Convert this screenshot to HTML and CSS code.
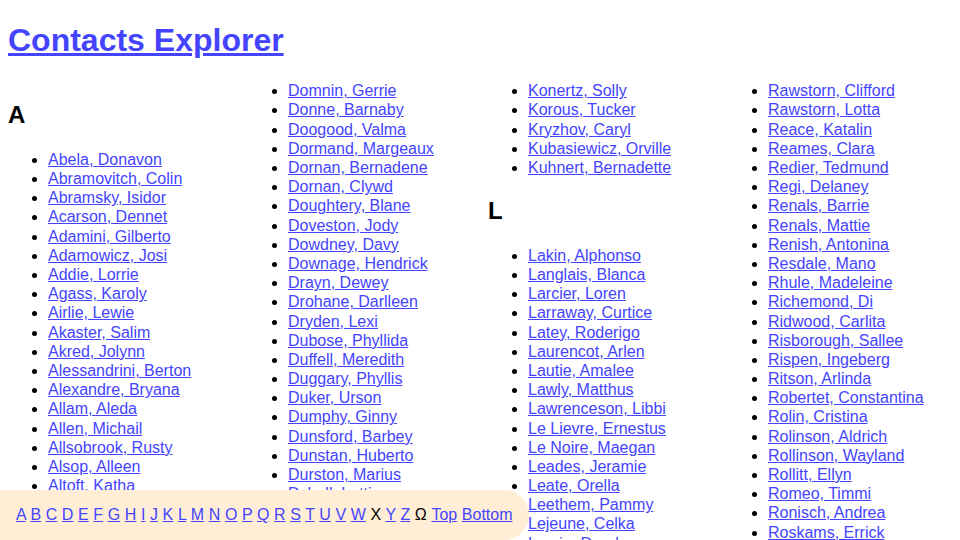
FILE: index.html
```html
<!DOCTYPE html>
<html lang="en">
<head>
<meta charset="utf-8">
<title>Contacts Explorer</title>
<link rel="stylesheet" href="styles.css">
</head>
<body>
<h1 class="title"><a href="#" id="top">Contacts Explorer</a></h1>
<main class="columns">
  <section class="col">
    <h2 class="letter" id="A">A</h2>
    <ul class="names">
      <li><a href="#">Abela, Donavon</a></li>
      <li><a href="#">Abramovitch, Colin</a></li>
      <li><a href="#">Abramsky, Isidor</a></li>
      <li><a href="#">Acarson, Dennet</a></li>
      <li><a href="#">Adamini, Gilberto</a></li>
      <li><a href="#">Adamowicz, Josi</a></li>
      <li><a href="#">Addie, Lorrie</a></li>
      <li><a href="#">Agass, Karoly</a></li>
      <li><a href="#">Airlie, Lewie</a></li>
      <li><a href="#">Akaster, Salim</a></li>
      <li><a href="#">Akred, Jolynn</a></li>
      <li><a href="#">Alessandrini, Berton</a></li>
      <li><a href="#">Alexandre, Bryana</a></li>
      <li><a href="#">Allam, Aleda</a></li>
      <li><a href="#">Allen, Michail</a></li>
      <li><a href="#">Allsobrook, Rusty</a></li>
      <li><a href="#">Alsop, Alleen</a></li>
      <li><a href="#">Altoft, Katha</a></li>
      <li><a href="#">Alvarado, Tessy</a></li>
    </ul>
  </section>
  <section class="col">
    <ul class="names cont">
      <li><a href="#">Domnin, Gerrie</a></li>
      <li><a href="#">Donne, Barnaby</a></li>
      <li><a href="#">Doogood, Valma</a></li>
      <li><a href="#">Dormand, Margeaux</a></li>
      <li><a href="#">Dornan, Bernadene</a></li>
      <li><a href="#">Dornan, Clywd</a></li>
      <li><a href="#">Doughtery, Blane</a></li>
      <li><a href="#">Doveston, Jody</a></li>
      <li><a href="#">Dowdney, Davy</a></li>
      <li><a href="#">Downage, Hendrick</a></li>
      <li><a href="#">Drayn, Dewey</a></li>
      <li><a href="#">Drohane, Darlleen</a></li>
      <li><a href="#">Dryden, Lexi</a></li>
      <li><a href="#">Dubose, Phyllida</a></li>
      <li><a href="#">Duffell, Meredith</a></li>
      <li><a href="#">Duggary, Phyllis</a></li>
      <li><a href="#">Duker, Urson</a></li>
      <li><a href="#">Dumphy, Ginny</a></li>
      <li><a href="#">Dunsford, Barbey</a></li>
      <li><a href="#">Dunstan, Huberto</a></li>
      <li><a href="#">Durston, Marius</a></li>
      <li><a href="#">Dyball, Lettie</a></li>
    </ul>
  </section>
  <section class="col">
    <ul class="names cont">
      <li><a href="#">Konertz, Solly</a></li>
      <li><a href="#">Korous, Tucker</a></li>
      <li><a href="#">Kryzhov, Caryl</a></li>
      <li><a href="#">Kubasiewicz, Orville</a></li>
      <li><a href="#">Kuhnert, Bernadette</a></li>
    </ul>
    <h2 class="letter" id="L">L</h2>
    <ul class="names">
      <li><a href="#">Lakin, Alphonso</a></li>
      <li><a href="#">Langlais, Blanca</a></li>
      <li><a href="#">Larcier, Loren</a></li>
      <li><a href="#">Larraway, Curtice</a></li>
      <li><a href="#">Latey, Roderigo</a></li>
      <li><a href="#">Laurencot, Arlen</a></li>
      <li><a href="#">Lautie, Amalee</a></li>
      <li><a href="#">Lawly, Matthus</a></li>
      <li><a href="#">Lawrenceson, Libbi</a></li>
      <li><a href="#">Le Lievre, Ernestus</a></li>
      <li><a href="#">Le Noire, Maegan</a></li>
      <li><a href="#">Leades, Jeramie</a></li>
      <li><a href="#">Leate, Orella</a></li>
      <li><a href="#">Leethem, Pammy</a></li>
      <li><a href="#">Lejeune, Celka</a></li>
      <li><a href="#">Lemin, Doralynn</a></li>
    </ul>
  </section>
  <section class="col">
    <ul class="names cont">
      <li><a href="#">Rawstorn, Clifford</a></li>
      <li><a href="#">Rawstorn, Lotta</a></li>
      <li><a href="#">Reace, Katalin</a></li>
      <li><a href="#">Reames, Clara</a></li>
      <li><a href="#">Redier, Tedmund</a></li>
      <li><a href="#">Regi, Delaney</a></li>
      <li><a href="#">Renals, Barrie</a></li>
      <li><a href="#">Renals, Mattie</a></li>
      <li><a href="#">Renish, Antonina</a></li>
      <li><a href="#">Resdale, Mano</a></li>
      <li><a href="#">Rhule, Madeleine</a></li>
      <li><a href="#">Richemond, Di</a></li>
      <li><a href="#">Ridwood, Carlita</a></li>
      <li><a href="#">Risborough, Sallee</a></li>
      <li><a href="#">Rispen, Ingeberg</a></li>
      <li><a href="#">Ritson, Arlinda</a></li>
      <li><a href="#">Robertet, Constantina</a></li>
      <li><a href="#">Rolin, Cristina</a></li>
      <li><a href="#">Rolinson, Aldrich</a></li>
      <li><a href="#">Rollinson, Wayland</a></li>
      <li><a href="#">Rollitt, Ellyn</a></li>
      <li><a href="#">Romeo, Timmi</a></li>
      <li><a href="#">Ronisch, Andrea</a></li>
      <li><a href="#">Roskams, Errick</a></li>
    </ul>
  </section>
</main>
<nav class="jumpbar">
  <a href="#A">A</a> <a href="#">B</a> <a href="#">C</a> <a href="#">D</a> <a href="#">E</a> <a href="#">F</a> <a href="#">G</a> <a href="#">H</a> <a href="#">I</a> <a href="#">J</a> <a href="#">K</a> <a href="#L">L</a> <a href="#">M</a> <a href="#">N</a> <a href="#">O</a> <a href="#">P</a> <a href="#">Q</a> <a href="#">R</a> <a href="#">S</a> <a href="#">T</a> <a href="#">U</a> <a href="#">V</a> <a href="#">W</a> <span class="off">X</span> <a href="#">Y</a> <a href="#">Z</a> <span class="off">Ω</span> <a href="#top">Top</a> <a href="#">Bottom</a>
</nav>
</body>
</html>
```

FILE: styles.css
```css
html {
  background: #ffffff;
}

body {
  margin: 0;
  padding: 0 8px;
  font-family: "Liberation Sans", Arial, sans-serif;
  font-size: 16px;
  line-height: 1.2;
  color: #000000;
}

a {
  color: #4444ff;
}

.title {
  font-size: 32px;
  font-weight: bold;
  margin: 21.44px 0;
}

.columns {
  display: grid;
  grid-template-columns: repeat(4, 1fr);
  column-gap: 16px;
  align-items: start;
}

.letter {
  font-size: 24px;
  font-weight: bold;
  margin: 19.92px 0;
}

.names {
  margin: 16px 0;
  padding-left: 40px;
  list-style: disc;
}

.names.cont {
  margin-top: 0;
}

.jumpbar {
  position: fixed;
  left: 0;
  bottom: 0;
  height: 20px;
  line-height: 20px;
  padding: 15px 16px 15px 16px;
  background: #ffeed5;
  border-radius: 0 25px 25px 0;
  white-space: nowrap;
  word-spacing: 0.15px;
}

.jumpbar .off {
  color: #000000;
}
```
